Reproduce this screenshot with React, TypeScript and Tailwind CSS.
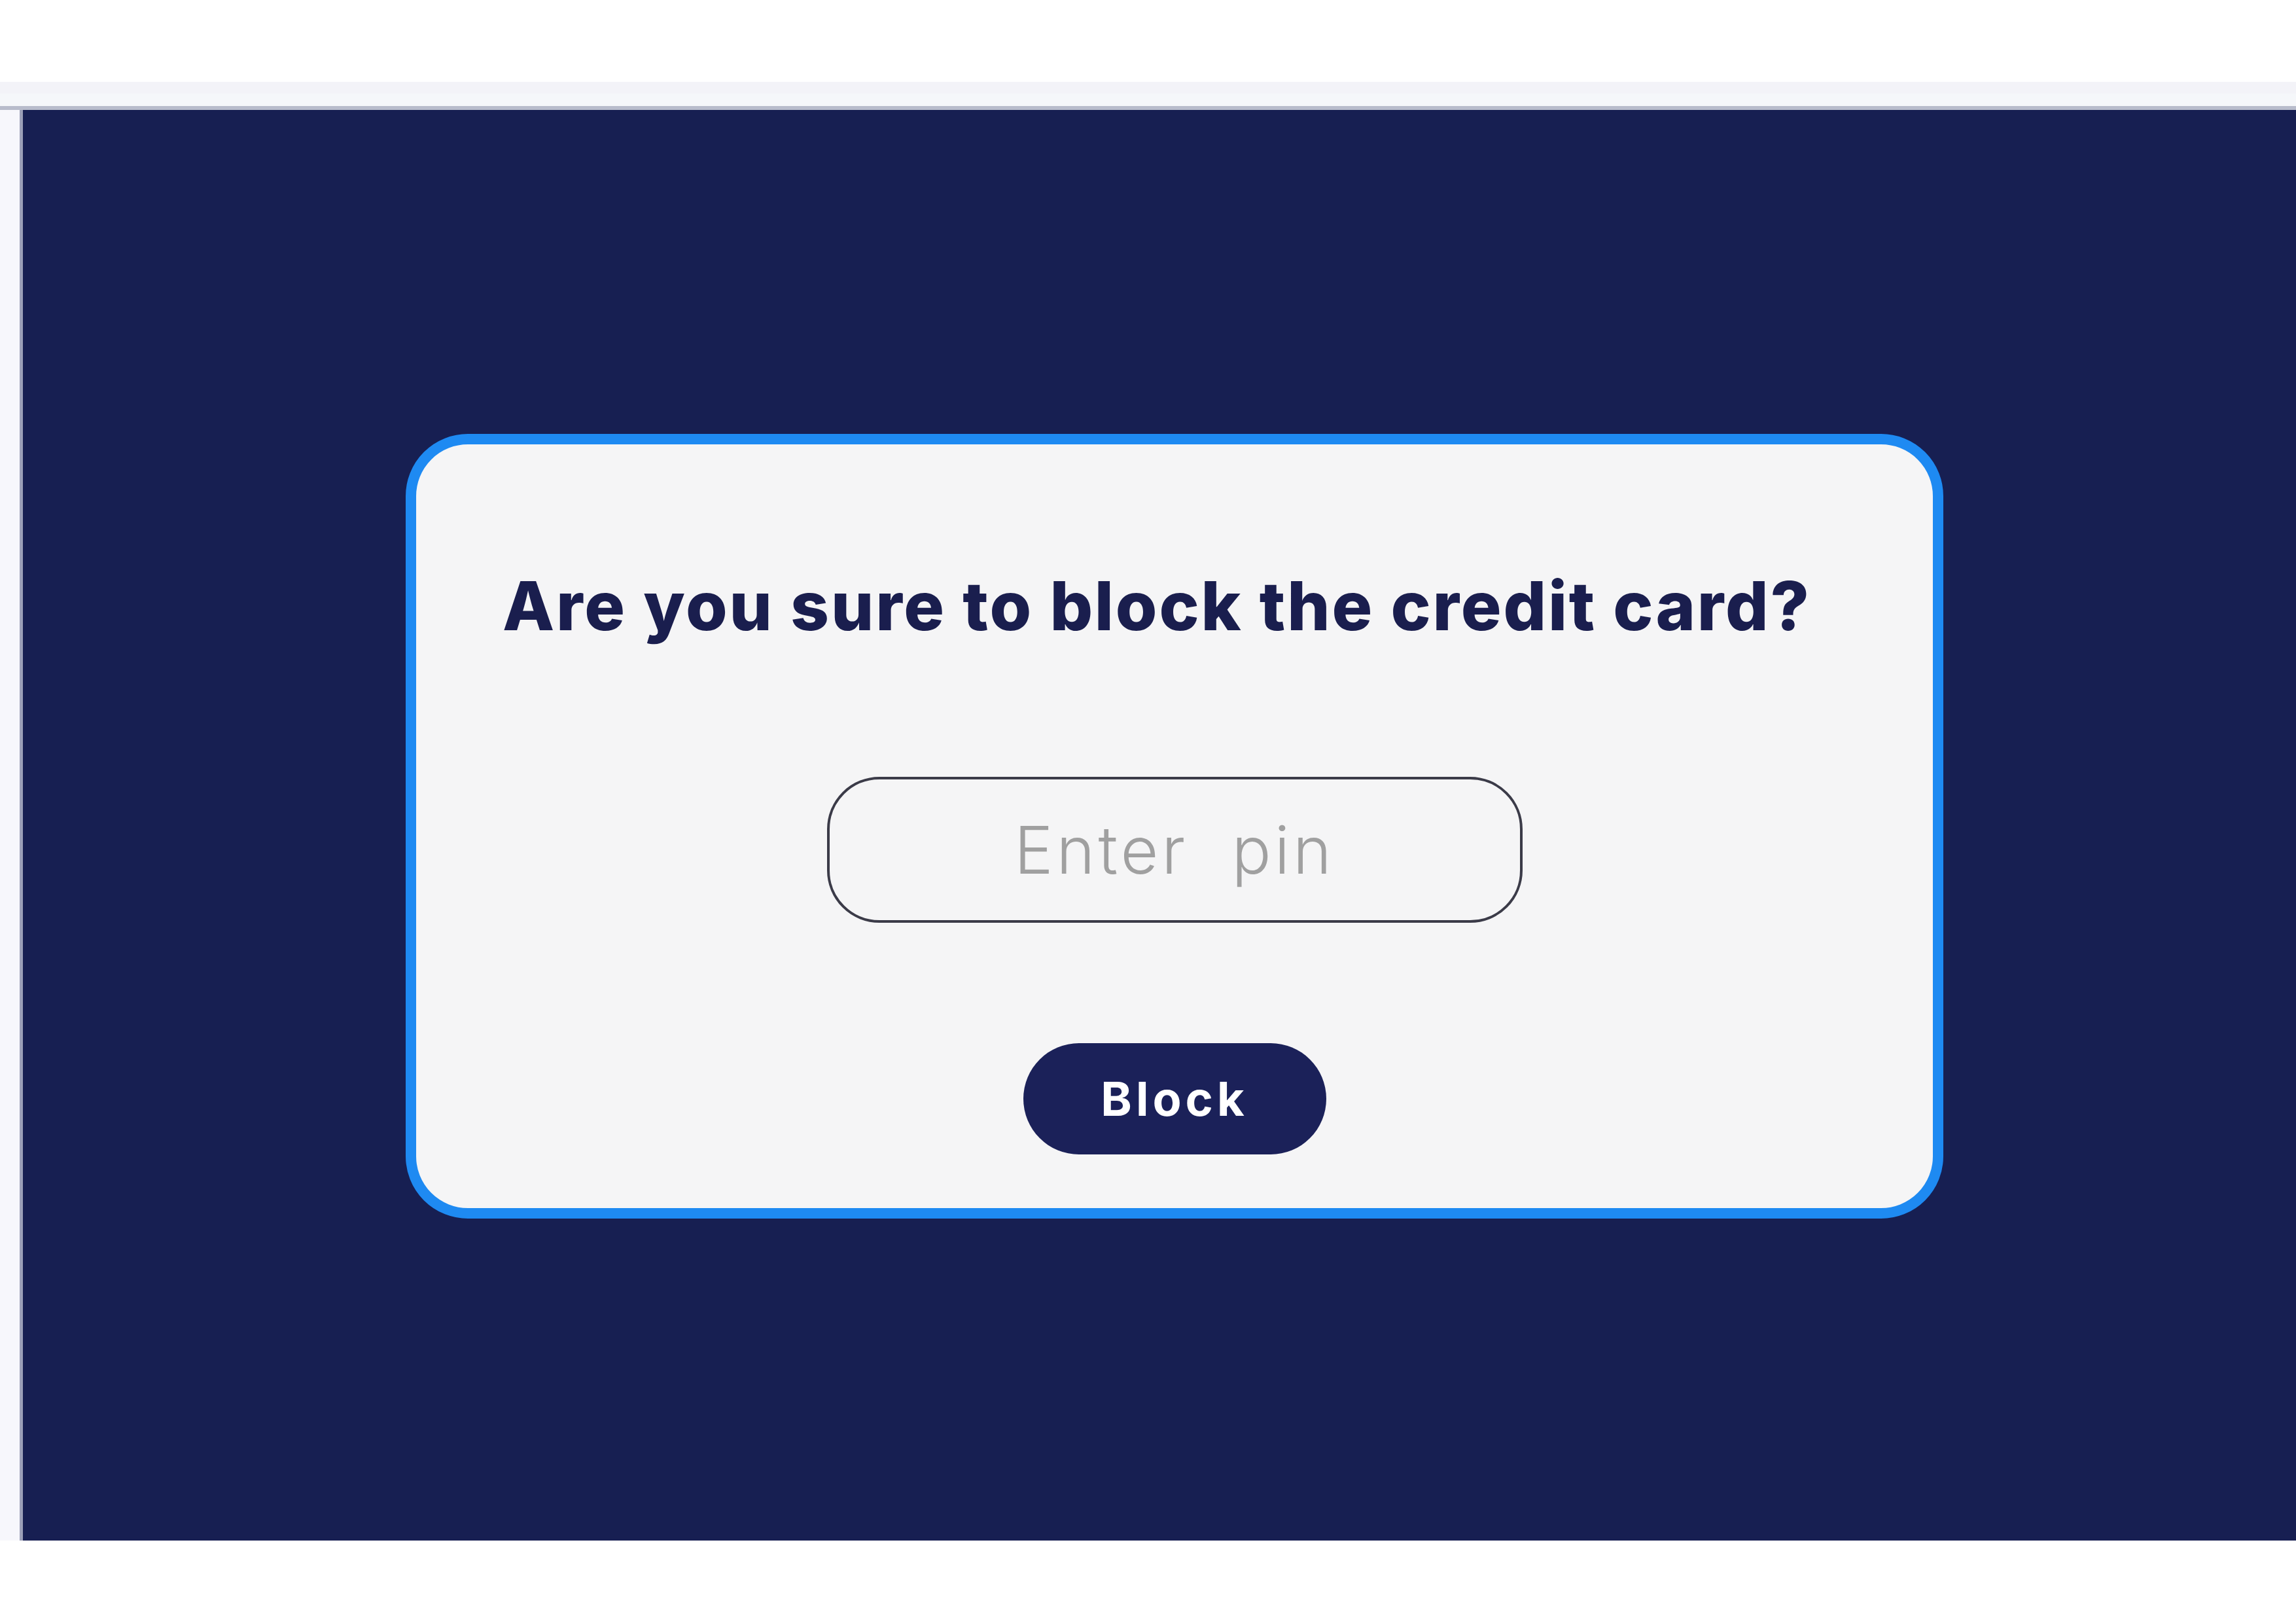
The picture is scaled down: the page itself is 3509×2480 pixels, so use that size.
import { useState } from "react";

export default function App() {
  const [pin, setPin] = useState("");

  return (
    <div className="flex h-[2480px] w-[3509px] flex-col bg-white font-['Inter','Liberation_Sans',sans-serif]">
      {/* window chrome above the screen */}
      <div className="h-[125px] shrink-0 bg-white" />
      <div className="h-[18px] shrink-0 bg-[#f3f3f8]" />
      <div className="h-[19px] shrink-0 bg-[#f5f7fa]" />
      <div className="h-[6px] shrink-0 bg-[#b8bccb]" />

      <div className="flex h-[2186px] shrink-0">
        <div className="w-[30px] shrink-0 bg-[#f7f7fc]" />
        <div className="w-[5px] shrink-0 bg-[#9ca0b8]" />

        {/* navy screen */}
        <main className="flex-1 bg-[#171f52] pl-[585px] pt-[495px]">
          <section className="flex h-[1199px] w-[2350px] flex-col items-center rounded-[95px] border-[16px] border-[#1e8af2] bg-[#f5f5f6]">
            <h1 className="mt-[195px] pr-[54px] text-[103px] font-extrabold leading-none tracking-[2.8px] text-[#1a1e4e]">
              Are you sure to block the credit card?
            </h1>

            <input
              type="password"
              value={pin}
              onChange={(e) => setPin(e.target.value)}
              placeholder="Enter  pin"
              className="mt-[210px] h-[223px] w-[1063px] rounded-[80px] border-[4px] border-[#3b3b48] bg-transparent text-center text-[100px] font-light leading-none tracking-[5px] text-[#1a1e4e] outline-none placeholder:text-[#a0a0a0]"
            />

            <button
              type="button"
              className="mt-[184px] flex h-[170px] w-[463px] items-center justify-center rounded-full bg-[#1b2159] text-[72px] font-bold leading-none tracking-[6px] text-white"
            >
              Block
            </button>
          </section>
        </main>
      </div>

      <div className="flex-1 bg-white" />
    </div>
  );
}
